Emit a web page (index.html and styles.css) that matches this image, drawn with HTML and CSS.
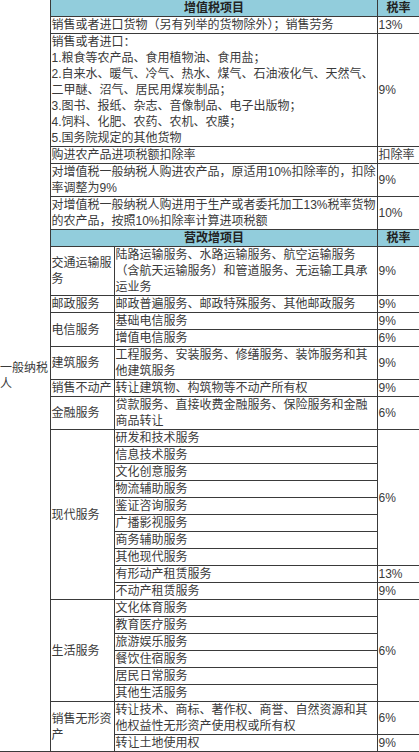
FILE: index.html
```html
<!DOCTYPE html>
<html lang="zh-CN">
<head>
<meta charset="utf-8">
<title>增值税税率表</title>
<link rel="stylesheet" href="styles.css">
</head>
<body>
<table class="tax">
  <colgroup>
    <col class="c0"><col class="c1"><col class="c2"><col class="c3">
  </colgroup>
  <tr class="first">
    <td class="side" rowspan="32">一般纳税<br>人</td>
    <th colspan="2">增值税项目</th>
    <th>税率</th>
  </tr>
  <tr><td colspan="2">销售或者进口货物（另有列举的货物除外）；销售劳务</td><td>13%</td></tr>
  <tr><td colspan="2">销售或者进口：<br>1.粮食等农产品、食用植物油、食用盐；<br>2.自来水、暖气、冷气、热水、煤气、石油液化气、天然气、<br>二甲醚、沼气、居民用煤炭制品；<br>3.图书、报纸、杂志、音像制品、电子出版物；<br>4.饲料、化肥、农药、农机、农膜；<br>5.国务院规定的其他货物</td><td>9%</td></tr>
  <tr><td colspan="2">购进农产品进项税额扣除率</td><td>扣除率</td></tr>
  <tr><td colspan="2">对增值税一般纳税人购进农产品，原适用10%扣除率的，扣除<br>率调整为9%</td><td>9%</td></tr>
  <tr><td colspan="2">对增值税一般纳税人购进用于生产或者委托加工13%税率货物<br>的农产品，按照10%扣除率计算进项税额</td><td>10%</td></tr>
  <tr><th colspan="2">营改增项目</th><th>税率</th></tr>
  <tr><td>交通运输服<br>务</td><td>陆路运输服务、水路运输服务、航空运输服务<br>（含航天运输服务）和管道服务、无运输工具承<br>运业务</td><td>9%</td></tr>
  <tr><td>邮政服务</td><td>邮政普遍服务、邮政特殊服务、其他邮政服务</td><td>9%</td></tr>
  <tr><td rowspan="2">电信服务</td><td>基础电信服务</td><td>9%</td></tr>
  <tr><td>增值电信服务</td><td>6%</td></tr>
  <tr><td>建筑服务</td><td>工程服务、安装服务、修缮服务、装饰服务和其<br>他建筑服务</td><td>9%</td></tr>
  <tr><td>销售不动产</td><td>转让建筑物、构筑物等不动产所有权</td><td>9%</td></tr>
  <tr><td>金融服务</td><td>贷款服务、直接收费金融服务、保险服务和金融<br>商品转让</td><td>6%</td></tr>
  <tr><td rowspan="10">现代服务</td><td>研发和技术服务</td><td rowspan="8">6%</td></tr>
  <tr><td>信息技术服务</td></tr>
  <tr><td>文化创意服务</td></tr>
  <tr><td>物流辅助服务</td></tr>
  <tr><td>鉴证咨询服务</td></tr>
  <tr><td>广播影视服务</td></tr>
  <tr><td>商务辅助服务</td></tr>
  <tr><td>其他现代服务</td></tr>
  <tr><td>有形动产租赁服务</td><td>13%</td></tr>
  <tr><td>不动产租赁服务</td><td>9%</td></tr>
  <tr><td rowspan="6">生活服务</td><td>文化体育服务</td><td rowspan="6">6%</td></tr>
  <tr><td>教育医疗服务</td></tr>
  <tr><td>旅游娱乐服务</td></tr>
  <tr><td>餐饮住宿服务</td></tr>
  <tr><td>居民日常服务</td></tr>
  <tr><td>其他生活服务</td></tr>
  <tr><td rowspan="2">销售无形资<br>产</td><td>转让技术、商标、著作权、商誉、自然资源和其<br>他权益性无形资产使用权或所有权</td><td>6%</td></tr>
  <tr><td>转让土地使用权</td><td>9%</td></tr>
</table>
</body>
</html>
```

FILE: styles.css
```css
html, body {
  margin: 0;
  padding: 0;
  background: #ffffff;
}

.tax {
  border-collapse: collapse;
  table-layout: fixed;
  width: 419px;
  font-family: "Liberation Sans", "Noto Sans CJK SC", sans-serif;
  font-size: 12px;
  line-height: 16px;
  color: #3a3a3a;
}

.c0 { width: 50px; }
.c1 { width: 64px; }
.c2 { width: 263px; }
.c3 { width: 42px; }

.tax td,
.tax th {
  border: 1px solid #3a3a3a;
  padding: 0 0 0 1px;
  vertical-align: middle;
  text-align: left;
  white-space: nowrap;
  overflow: hidden;
  font-weight: normal;
}

.tax th {
  background: #92cddc;
  text-align: center;
  font-weight: bold;
  color: #222222;
}

.tax .first th {
  border-top: 0;
}

.tax .side {
  border-left: 0;
  border-top: 0;
  padding: 0;
}
```
